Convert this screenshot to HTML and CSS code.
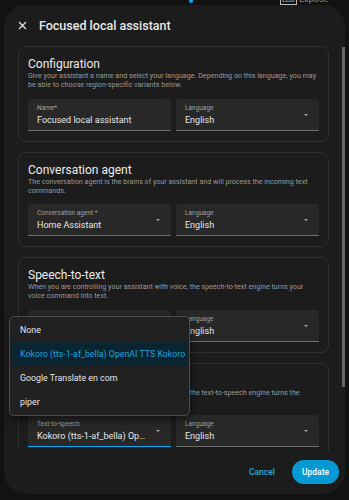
FILE: index.html
```html
<!DOCTYPE html>
<html lang="en">
<head>
    <meta charset="UTF-8">
    <meta name="viewport" content="width=device-width, initial-scale=1.0">
    <title>Focused local assistant</title>
    <link rel="stylesheet" href="styles.css">
</head>
<body>
    <!-- bits of the page behind the dialog -->
    <div class="backdrop">
        <span class="pin"></span>
        <span class="lcd"><span class="lcd-box">LCD</span> Expose</span>
    </div>

    <div class="dialog">
        <div class="dialog-header">
            <svg class="close" width="9" height="9" viewBox="0 0 9 9">
                <path d="M1 1L8 8M8 1L1 8" stroke="#e1e1e1" stroke-width="1.3" fill="none"/>
            </svg>
            <span class="dialog-title">Focused local assistant</span>
        </div>

        <div class="dialog-content">
            <div class="card">
                <h3>Configuration</h3>
                <p>Give your assistant a name and select your language. Depending on this language, you may be able to choose region-specific variants below.</p>
                <div class="fields">
                    <div class="field">
                        <span class="label">Name*</span>
                        <span class="value">Focused local assistant</span>
                    </div>
                    <div class="field select">
                        <span class="label">Language</span>
                        <span class="value">English</span>
                    </div>
                </div>
            </div>

            <div class="card">
                <h3>Conversation agent</h3>
                <p>The conversation agent is the brains of your assistant and will process the incoming text commands.</p>
                <div class="fields">
                    <div class="field select">
                        <span class="label">Conversation agent *</span>
                        <span class="value">Home Assistant</span>
                    </div>
                    <div class="field select">
                        <span class="label">Language</span>
                        <span class="value">English</span>
                    </div>
                </div>
            </div>

            <div class="card">
                <h3>Speech-to-text</h3>
                <p>When you are controlling your assistant with voice, the speech-to-text engine turns your voice command into text.</p>
                <div class="fields">
                    <div class="field select">
                        <span class="label">Speech-to-text</span>
                        <span class="value">faster-whisper</span>
                    </div>
                    <div class="field select">
                        <span class="label">Language</span>
                        <span class="value">English</span>
                    </div>
                </div>
            </div>

            <div class="card">
                <h3>Text-to-speech</h3>
                <p>When you are controlling your assistant with voice, the text-to-speech engine turns the conversation text responses into audio.</p>
                <div class="fields">
                    <div class="field select focused">
                        <span class="label">Text-to-speech</span>
                        <span class="value">Kokoro (tts-1-af_bella) OpenAI TTS Kokoro</span>
                    </div>
                    <div class="field select">
                        <span class="label">Language</span>
                        <span class="value">English</span>
                    </div>
                </div>
            </div>
        </div>

        <div class="dialog-footer">
            <button class="btn-text">Cancel</button>
            <button class="btn-primary">Update</button>
        </div>

        <div class="scrollbar"></div>
    </div>

    <!-- open select menu -->
    <ul class="menu">
        <li>None</li>
        <li class="selected">Kokoro (tts-1-af_bella) OpenAI TTS Kokoro</li>
        <li>Google Translate en com</li>
        <li>piper</li>
    </ul>
</body>
</html>
```

FILE: styles.css
```css
body {
    margin: 0;
    height: 500px;
    overflow: hidden;
    position: relative;
    background: #121212;
    font-family: Roboto, "Noto Sans", sans-serif;
    color: #e1e1e1;
}
.backdrop {
    height: 5px;
    overflow: hidden;
    display: flex;
    align-items: flex-end;
}
.backdrop .pin {
    align-self: flex-start;
    width: 4px;
    height: 3px;
    margin-left: 189px;
    background: #03a9f4;
    border-radius: 0 0 2px 2px;
}
.backdrop .lcd {
    margin-left: 87px;
    font-size: 9px;
    line-height: 8px;
    color: #8a8a8a;
    margin-bottom: 1px;
    white-space: nowrap;
}
.lcd-box {
    border: 1px solid #bbb;
    color: #bbb;
    padding: 0 1px;
    font-size: 7px;
}
.dialog {
    margin: 0 4px;
    height: 489px;
    background: #1c1c1c;
    border-radius: 22px;
    display: flex;
    flex-direction: column;
    position: relative;
    overflow: hidden;
}
.dialog-header {
    height: 40px;
    flex-shrink: 0;
    display: flex;
    align-items: center;
    gap: 12px;
    padding-left: 14px;
}
.dialog-title {
    font-size: 12.5px;
    font-weight: 500;
    color: #e8e8e8;
}
.dialog-content {
    flex: 1;
    overflow: hidden;
    padding: 1px 16px 0 14px;
}
.card {
    border: 1px solid #303030;
    border-radius: 8px;
    padding: 10px 9px;
    margin-bottom: 10px;
}
.card h3 {
    margin: 0;
    font-size: 12px;
    font-weight: 400;
    line-height: 14px;
    color: #ececec;
}
.card p {
    margin: 0;
    font-size: 7.15px;
    line-height: 9px;
    color: #9a9a9a;
}
.fields {
    display: grid;
    grid-template-columns: 1fr 1fr;
    gap: 5px;
    margin-top: 9.5px;
}
.field {
    height: 25px;
    background: #282828;
    border-bottom: 1px solid #6e6e6e;
    border-radius: 4px 4px 0 0;
    position: relative;
    padding: 6px 22px 0 9px;
    display: flex;
    flex-direction: column;
    min-width: 0;
}
.field .label {
    font-size: 6.5px;
    line-height: 7px;
    color: #a0a0a0;
}
.field .value {
    margin-top: 3px;
    font-size: 9px;
    line-height: 11px;
    color: #e6e6e6;
    white-space: nowrap;
    overflow: hidden;
    text-overflow: ellipsis;
}
.field.select::after {
    content: "";
    position: absolute;
    right: 11px;
    top: 15px;
    border-left: 2.5px solid transparent;
    border-right: 2.5px solid transparent;
    border-top: 2.5px solid #a8a8a8;
}
.field.focused {
    border-bottom-color: #03a9f4;
}
.dialog-footer {
    height: 41px;
    flex-shrink: 0;
    display: flex;
    justify-content: flex-end;
    align-items: center;
    padding: 0 6px 2px 0;
}
.btn-text,
.btn-primary {
    font-family: Roboto, "Noto Sans", sans-serif;
    font-size: 8.5px;
    font-weight: 500;
    border: none;
    cursor: pointer;
    padding: 0;
}
.btn-text {
    background: none;
    color: #28a9e6;
    margin-right: 17px;
}
.btn-primary {
    width: 47px;
    height: 24px;
    border-radius: 12px;
    background: #069ad4;
    color: #fff;
}
.scrollbar {
    position: absolute;
    right: -2px;
    top: 42px;
    width: 4px;
    height: 340px;
    background: #666;
    border-right: 1px solid #8a8a8a;
}
.menu {
    position: absolute;
    left: 9px;
    top: 316px;
    width: 181px;
    height: 100px;
    box-sizing: border-box;
    margin: 0;
    padding: 1px 2px;
    list-style: none;
    background: #212121;
    border: 1px solid #4c4c4c;
    border-radius: 5px;
    box-shadow: 0 4px 10px rgba(0, 0, 0, 0.5);
}
.menu li {
    height: 24px;
    line-height: 24px;
    padding-left: 8px;
    font-size: 8.8px;
    color: #e6e6e6;
    white-space: nowrap;
}
.menu li.selected {
    background: #0b2431;
    color: #1ea3dc;
}
```
